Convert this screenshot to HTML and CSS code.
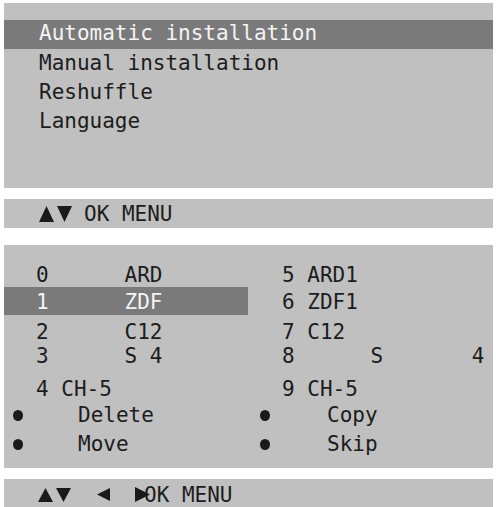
FILE: index.html
```
<!DOCTYPE html>
<html>
<head>
<meta charset="utf-8">
<link rel="stylesheet" href="styles.css">
</head>
<body>
<div class="screen">
  <div class="panel menu">
    <div class="mrow first sel">Automatic installation</div>
    <div class="mrow">Manual installation</div>
    <div class="mrow">Reshuffle</div>
    <div class="mrow">Language</div>
  </div>

  <div class="bar bar1">
    <svg class="tri" width="15" height="16" viewBox="0 0 15 16"><polygon points="0,16 7.5,0 15,16"/></svg>
    <svg class="tri tri-dn" width="15" height="16" viewBox="0 0 15 16"><polygon points="0,0 15,0 7.5,16"/></svg>
    <span class="btxt">OK MENU</span>
  </div>

  <div class="panel chans">
    <div class="crow r0"><span class="lc">0      ARD</span><span class="rc">5 ARD1</span></div>
    <div class="crow r1"><span class="lc sel">1      ZDF</span><span class="rc">6 ZDF1</span></div>
    <div class="crow r2"><span class="lc">2      C12</span><span class="rc">7 C12</span></div>
    <div class="crow r3"><span class="lc">3      S 4</span><span class="rc">8      S       4</span></div>
    <div class="crow r4"><span class="lc">4 CH-5</span><span class="rc">9 CH-5</span></div>
    <div class="crow r5"><span class="bc"><i class="dot"></i><span class="bl">Delete</span></span><span class="bc right"><i class="dot"></i><span class="bl">Copy</span></span></div>
    <div class="crow r6"><span class="bc"><i class="dot"></i><span class="bl">Move</span></span><span class="bc right"><i class="dot"></i><span class="bl">Skip</span></span></div>
  </div>

  <div class="bar bar2">
    <svg class="tri" width="15" height="14" viewBox="0 0 15 14"><polygon points="0,14 7.5,0 15,14"/></svg>
    <svg class="tri tri-dn2" width="15" height="14" viewBox="0 0 15 14"><polygon points="0,0 15,0 7.5,14"/></svg>
    <svg class="tri tri-l" width="13" height="13" viewBox="0 0 13 13"><polygon points="13,0 13,13 0,6.5"/></svg>
    <svg class="tri tri-r" width="15" height="15" viewBox="0 0 15 15"><polygon points="0,0 15,7.5 0,15"/></svg>
    <span class="btxt btxt2">OK MENU</span>
  </div>
</div>
</body>
</html>
```
FILE: styles.css
```
html, body {
  margin: 0;
  padding: 0;
  background: #ffffff;
}
body {
  font-family: "DejaVu Sans Mono", "Liberation Mono", monospace;
  font-size: 21px;
  color: #1c1c1c;
}
.screen {
  width: 489px;
  padding: 3px 0 0 4px;
  display: flex;
  flex-direction: column;
}
.panel, .bar {
  background: #c0c0c0;
}
.menu {
  height: 185px;
  box-sizing: border-box;
  padding-top: 17px;
}
.mrow {
  line-height: 29px;
  height: 29px;
  padding-left: 35px;
  white-space: pre;
}
.mrow.first {
  line-height: 26px;
  height: 29px;
  box-sizing: border-box;
  padding-bottom: 3px;
}
.sel {
  background: #7a7a7a;
  color: #f4f4f4;
}
.bar {
  display: flex;
  align-items: center;
  box-sizing: border-box;
}
.bar1 {
  margin-top: 11px;
  height: 29px;
  padding-left: 35px;
}
.tri {
  display: block;
  fill: #1a1a1a;
  flex: none;
}
.bar1 .tri-dn {
  margin-left: 3px;
}
.btxt {
  white-space: pre;
  line-height: 24px;
}
.bar1 .btxt {
  margin-left: 12px;
}
.chans {
  margin-top: 17px;
  height: 223px;
  box-sizing: border-box;
  padding-top: 19px;
}
.crow {
  display: flex;
  line-height: 24px;
  height: 24px;
  white-space: pre;
}
.lc {
  width: 244px;
  box-sizing: border-box;
  padding-left: 32px;
  flex: none;
}
.rc {
  padding-left: 34px;
}
.r0 { height: 23px; line-height: 23px; }
.r1 { height: 28px; }
.r1 .lc, .r1 .rc {
  box-sizing: border-box;
  height: 28px;
  padding-top: 2px;
  line-height: 26px;
}
.r2 { margin-top: 5px; }
.r3 { margin-top: 0; }
.r4 { margin-top: 9px; }
.r5 { margin-top: 2px; }
.r6 { margin-top: 5px; }
.bc {
  display: flex;
  align-items: center;
  width: 244px;
  flex: none;
  padding-left: 9px;
  box-sizing: border-box;
}
.bc.right {
  padding-left: 12px;
}
.dot {
  display: block;
  width: 10px;
  height: 11px;
  border-radius: 50%;
  background: #1a1a1a;
  flex: none;
}
.bl {
  margin-left: 55px;
}
.bc.right .bl {
  margin-left: 57px;
}
.bar2 {
  margin-top: 11px;
  height: 28px;
  padding-left: 34px;
  padding-top: 3px;
}
.bar2 .tri-dn2 {
  margin-left: 3px;
}
.bar2 .tri-l {
  margin-left: 26px;
}
.bar2 .tri-r {
  margin-left: 25px;
  position: relative;
  z-index: 1;
}
.bar2 .btxt2 {
  margin-left: -6px;
}
```
